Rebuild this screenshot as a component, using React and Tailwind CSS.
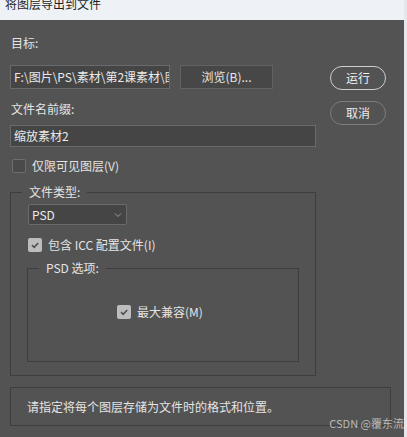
export default function App() {
  const Check = ({ checked }) => (
    <span
      className={
        "w-[14px] h-[14px] rounded-[2px] flex items-center justify-center shrink-0 " +
        (checked ? "bg-[#bdbdbd]" : "bg-[#4a4a4a] border border-[#6e6e6e]")
      }
    >
      {checked && (
        <svg width="10" height="10" viewBox="0 0 10 10">
          <path d="M2 5.2 L4.2 7.3 L8.2 3" fill="none" stroke="#505050" strokeWidth="1.6" />
        </svg>
      )}
    </span>
  )

  return (
    <div
      className="w-[407px] h-[437px] flex bg-[#535353] overflow-hidden text-[12px] text-[#e4e4e4] leading-[16px]"
      style={{ fontFamily: '"Noto Sans CJK SC", "Noto Sans", sans-serif' }}
    >
      <div className="flex-1 flex flex-col relative">
        <div className="h-[20px] bg-[#eef2f7] shrink-0 overflow-hidden">
          <div className="pl-[5px] -mt-[4px] text-[#1e1e1e] text-[12px]">将图层导出到文件</div>
        </div>

        <div className="flex pl-[10px]">
          <div className="w-[306px] flex flex-col">
            <div className="mt-[15px] pl-[1px]">目标:</div>
            <div className="mt-[14px] flex gap-[10px]">
              <div className="w-[160px] h-[24px] bg-[#454545] border border-[#6a6a6a] px-[3px] flex items-center overflow-hidden whitespace-nowrap text-[#eaeaea]">
                F:\图片\PS\素材\第2课素材\图层
              </div>
              <div className="w-[93px] h-[24px] bg-[#474747] border border-[#626262] flex items-center justify-center text-[#e8e8e8]">
                浏览(B)...
              </div>
            </div>
            <div className="mt-[12px] pl-[1px]">文件名前缀:</div>
            <div className="mt-[8px] h-[22px] bg-[#454545] border border-[#6a6a6a] px-[3px] flex items-center text-[#eaeaea]">
              缩放素材2
            </div>
            <div className="mt-[11px] flex items-center gap-[6px] pl-[2px]">
              <Check checked={false} />
              <span>仅限可见图层(V)</span>
            </div>

            <fieldset className="mt-[10px] border border-[#3e3e3e] pb-[13px]">
              <legend className="ml-[11px] px-[7px] text-[#e4e4e4]">文件类型:</legend>
              <div className="ml-[17px] mt-[4px] w-[99px] h-[21px] bg-[#454545] border border-[#6a6a6a] rounded-[2px] flex items-center justify-between px-[3px]">
                <span className="text-[#eaeaea]">PSD</span>
                <svg width="8" height="6" viewBox="0 0 8 6" className="mr-[1px]">
                  <path d="M1 1.5 L4 4.5 L7 1.5" fill="none" stroke="#9a9a9a" strokeWidth="1" />
                </svg>
              </div>
              <div className="ml-[17px] mt-[12px] flex items-center gap-[6px]">
                <Check checked />
                <span>包含 ICC 配置文件(I)</span>
              </div>
              <fieldset className="ml-[16px] mt-[7px] w-[272px] h-[102px] border border-[#3e3e3e]">
                <legend className="ml-[11px] px-[7px]">PSD 选项:</legend>
                <div className="mt-[28px] flex items-center justify-center gap-[6px] pr-[6px]">
                  <Check checked />
                  <span>最大兼容(M)</span>
                </div>
              </fieldset>
            </fieldset>

            <div className="mt-[11px] w-[381px] h-[39px] border border-[#3e3e3e] flex items-center pl-[16px]">
              请指定将每个图层存储为文件时的格式和位置。
            </div>
          </div>

          <div className="ml-[14px] pt-[46px] flex flex-col gap-[11px]">
            <div className="w-[56px] h-[24px] rounded-full border-[1.5px] border-[#cfcfcf] flex items-center justify-center text-[#f2f2f2]">
              运行
            </div>
            <div className="w-[56px] h-[24px] rounded-full border border-[#7c7c7c] flex items-center justify-center text-[#ececec]">
              取消
            </div>
          </div>
        </div>

        <div className="absolute right-[0px] bottom-[6px] text-[11px] text-[#d8d8d8]/80">CSDN @覆东流</div>
      </div>
      <div className="w-[3px] bg-[#e4e7eb] shrink-0" />
    </div>
  )
}
